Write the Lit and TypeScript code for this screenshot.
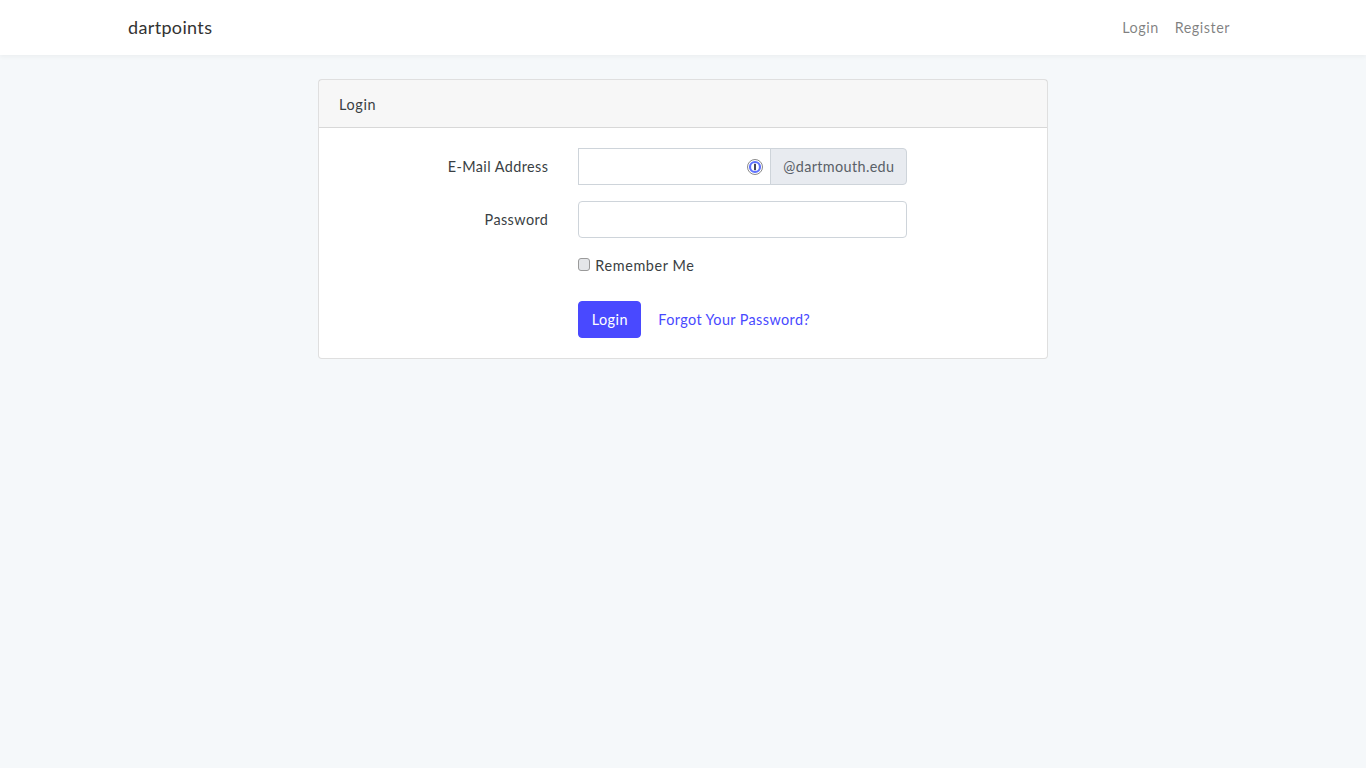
import { LitElement, html, css } from "lit";
import { customElement } from "lit/decorators.js";

@customElement("app-root")
export class AppRoot extends LitElement {
  static styles = css`
    :host { display: block; min-height: 768px; background: #f5f8fa; color: #3a3f44; font-family: Lato, "Open Sans", sans-serif; font-size: 14.4px; line-height: 1.6; box-sizing: border-box; }
    * { box-sizing: border-box; }
    .nav { height: 55px; background: #fff; box-shadow: 0 2px 4px rgba(0,0,0,.04); display: flex; justify-content: center; }
    .nav-in { width: 1140px; padding: 0 15px; display: flex; align-items: center; justify-content: space-between; }
    .brand { font-size: 18px; color: #333; text-decoration: none; letter-spacing: .35px; }
    .links { display: flex; gap: 16px; padding-right: 8px; }
    .links a { color: rgba(0,0,0,.5); text-decoration: none; letter-spacing: .5px; }
    main { padding-top: 24px; display: flex; justify-content: center; }
    .card { width: 730px; background: #fff; border: 1px solid rgba(0,0,0,.125); border-radius: 4px; }
    .head { height: 48px; padding: 13px 20px 11px; background: rgba(0,0,0,.03); border-bottom: 1px solid rgba(0,0,0,.125); letter-spacing: .65px; }
    .body { padding: 20px; }
    .row { display: grid; grid-template-columns: 209.33px 329px; column-gap: 30px; margin-bottom: 16px; align-items: center; }
    .row.check { margin-bottom: 24px; }
    .row.last { margin-bottom: 0; }
    .lbl { text-align: right; letter-spacing: .42px; }
    .field { grid-column: 2; }
    .input { height: 37px; border: 1px solid #ced4da; background: #fff; border-radius: 4px; }
    .group { display: flex; height: 37px; }
    .group .input { flex: 1; border-radius: 0; display: flex; align-items: center; justify-content: flex-end; padding-right: 7px; }
    .addon { width: 137px; border: 1px solid #ced4da; margin-left: -1px; background: #e8ebf0; color: #5a6168; border-radius: 0 4px 4px 0; display: flex; align-items: center; padding: 0 12px; letter-spacing: .37px; white-space: nowrap; }
    .remember { display: flex; height: 23px; align-items: center; letter-spacing: .62px; }
    .box { width: 12px; height: 13px; border: 1px solid #9a9a9a; border-radius: 3px; background: #e4e6e9; margin-right: 5px; position: relative; top: -1px; }
    .actions { display: flex; align-items: center; }
    .btn { height: 37px; width: 63px; background: #4949ff; color: #fff; border: 1px solid #4949ff; border-radius: 4px; display: flex; align-items: center; justify-content: center; letter-spacing: .45px; }
    .forgot { margin-left: 17px; color: #4949ff; text-decoration: none; letter-spacing: .4px; }
    svg { display: block; }
  `;
  render() {
    return html`
      <nav class="nav"><div class="nav-in">
        <a class="brand" href="#">dartpoints</a>
        <div class="links"><a href="#">Login</a><a href="#">Register</a></div>
      </div></nav>
      <main><section class="card">
        <div class="head">Login</div>
        <div class="body">
          <div class="row">
            <div class="lbl">E-Mail Address</div>
            <div class="group">
              <div class="input">
                <svg width="16" height="16" viewBox="0 0 16 16" aria-hidden="true">
                  <circle cx="8" cy="8" r="7.5" fill="#fff" stroke="#8a8a8a" stroke-width="1"/>
                  <circle cx="8" cy="8" r="5" fill="#fff" stroke="#5f72ff" stroke-width="2.2"/>
                  <rect x="7.2" y="4.8" width="1.6" height="6.4" fill="#1a1a2e"/>
                </svg>
              </div>
              <div class="addon">@dartmouth.edu</div>
            </div>
          </div>
          <div class="row">
            <div class="lbl">Password</div>
            <div class="input"></div>
          </div>
          <div class="row check">
            <div class="field remember"><span class="box"></span>Remember Me</div>
          </div>
          <div class="row last">
            <div class="field actions"><div class="btn">Login</div><a class="forgot" href="#">Forgot Your Password?</a></div>
          </div>
        </div>
      </section></main>
    `;
  }
}
